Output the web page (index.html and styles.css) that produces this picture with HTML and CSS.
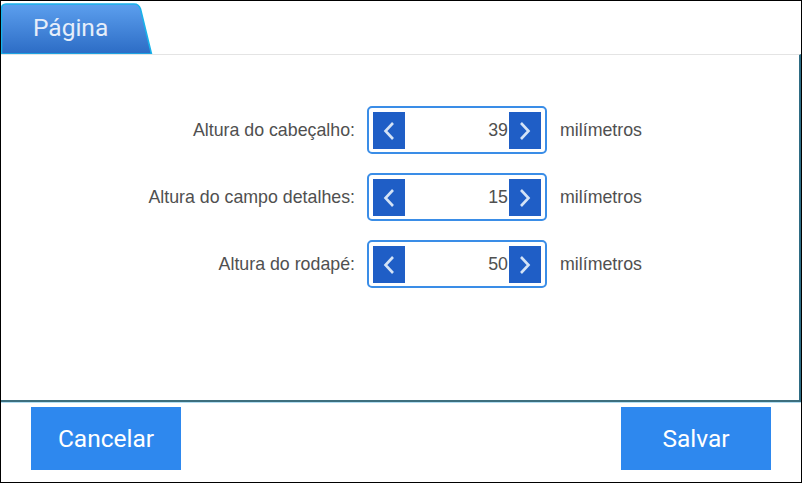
FILE: index.html
```html
<!DOCTYPE html>
<html>
<head>
<meta charset="utf-8">
<link rel="stylesheet" href="styles.css">
</head>
<body>
<div class="window">
  <div class="tabbar">
    <div class="tab">
      <svg class="tab-bg" width="152" height="51" viewBox="0 0 152 51">
        <defs>
          <linearGradient id="tg" x1="0" y1="0" x2="0" y2="1">
            <stop offset="0" stop-color="#5c9fee"/>
            <stop offset="1" stop-color="#2c6cc5"/>
          </linearGradient>
        </defs>
        <path d="M0.5,51 L0.5,6 Q0.5,1 5,1 L133,1 Q138,1 139.5,6 L150.5,51 Z" fill="url(#tg)" stroke="#19b2ea" stroke-width="1.6"/>
      </svg>
      <span class="tab-label">Página</span>
    </div>
  </div>
  <div class="panel">
    <div class="rows">
      <div class="row">
        <div class="label">Altura do cabeçalho:</div>
        <div class="spin">
          <div class="spin-btn"><svg class="chev" width="16" height="22" viewBox="0 0 16 22"><path d="M12,3 L4.5,11 L12,19" fill="none" stroke="#d4e3f6" stroke-width="2.6"/></svg></div>
          <div class="spin-val">39</div>
          <div class="spin-btn"><svg class="chev" width="16" height="22" viewBox="0 0 16 22"><path d="M4,3 L11.5,11 L4,19" fill="none" stroke="#d4e3f6" stroke-width="2.6"/></svg></div>
        </div>
        <div class="unit">milímetros</div>
      </div>
      <div class="row">
        <div class="label">Altura do campo detalhes:</div>
        <div class="spin">
          <div class="spin-btn"><svg class="chev" width="16" height="22" viewBox="0 0 16 22"><path d="M12,3 L4.5,11 L12,19" fill="none" stroke="#d4e3f6" stroke-width="2.6"/></svg></div>
          <div class="spin-val">15</div>
          <div class="spin-btn"><svg class="chev" width="16" height="22" viewBox="0 0 16 22"><path d="M4,3 L11.5,11 L4,19" fill="none" stroke="#d4e3f6" stroke-width="2.6"/></svg></div>
        </div>
        <div class="unit">milímetros</div>
      </div>
      <div class="row">
        <div class="label">Altura do rodapé:</div>
        <div class="spin">
          <div class="spin-btn"><svg class="chev" width="16" height="22" viewBox="0 0 16 22"><path d="M12,3 L4.5,11 L12,19" fill="none" stroke="#d4e3f6" stroke-width="2.6"/></svg></div>
          <div class="spin-val">50</div>
          <div class="spin-btn"><svg class="chev" width="16" height="22" viewBox="0 0 16 22"><path d="M4,3 L11.5,11 L4,19" fill="none" stroke="#d4e3f6" stroke-width="2.6"/></svg></div>
        </div>
        <div class="unit">milímetros</div>
      </div>
    </div>
  </div>
  <div class="footer">
    <button class="btn">Cancelar</button>
    <button class="btn">Salvar</button>
  </div>
</div>
</body>
</html>
```
FILE: styles.css
```css
html, body {
  margin: 0;
  padding: 0;
  background: #ffffff;
}
.window {
  width: 802px;
  height: 483px;
  box-sizing: border-box;
  border: 1px solid #000;
  display: flex;
  flex-direction: column;
  overflow: hidden;
}
.tabbar {
  height: 53px;
  display: flex;
  align-items: flex-end;
  flex: none;
}
.tab {
  position: relative;
  width: 152px;
  height: 51px;
}
.tab-bg {
  position: absolute;
  left: 0;
  top: 0;
}
.tab-label {
  position: relative;
  display: block;
  padding-left: 32px;
  padding-top: 10px;
  font-family: Roboto, "Liberation Sans", sans-serif;
  font-size: 24.5px;
  line-height: 30px;
  color: #e6eefa;
}
.panel {
  height: 345px;
  flex: none;
  border-top: 1px solid #e4e4e4;
  border-right: 2px solid #2e6c84;
  border-bottom: 2px solid #3d6f7e;
  box-shadow: 0 1px 0 #b3def2;
  box-sizing: content-box;
}
.rows {
  padding-top: 51px;
  display: flex;
  flex-direction: column;
  gap: 19px;
}
.row {
  display: flex;
  align-items: center;
  height: 48px;
}
.label {
  width: 354px;
  text-align: right;
  font-family: "Liberation Sans", Arial, sans-serif;
  font-size: 17.8px;
  color: #505050;
}
.spin {
  margin-left: 12px;
  width: 180px;
  height: 48px;
  box-sizing: border-box;
  border: 2px solid #3a8de7;
  border-radius: 5px;
  padding: 4px 4px 3px 4px;
  display: flex;
}
.spin-btn {
  width: 32px;
  background: #1f5ec6;
  display: flex;
  align-items: center;
  justify-content: center;
}
.chev {
  display: block;
}
.spin-val {
  flex: 1;
  font-family: "Liberation Sans", Arial, sans-serif;
  font-size: 17.8px;
  color: #505050;
  display: flex;
  align-items: center;
  justify-content: flex-end;
  padding-right: 1px;
}
.unit {
  margin-left: 13px;
  font-family: "Liberation Sans", Arial, sans-serif;
  font-size: 17.8px;
  color: #505050;
}
.footer {
  flex: 1;
  display: flex;
  justify-content: space-between;
  padding: 5px 30px 0 30px;
}
.btn {
  width: 150px;
  height: 63px;
  border: none;
  background: #2e88ee;
  color: #ffffff;
  font-family: Roboto, "Liberation Sans", sans-serif;
  font-size: 24.5px;
  padding: 0;
  margin: 0;
}
```
